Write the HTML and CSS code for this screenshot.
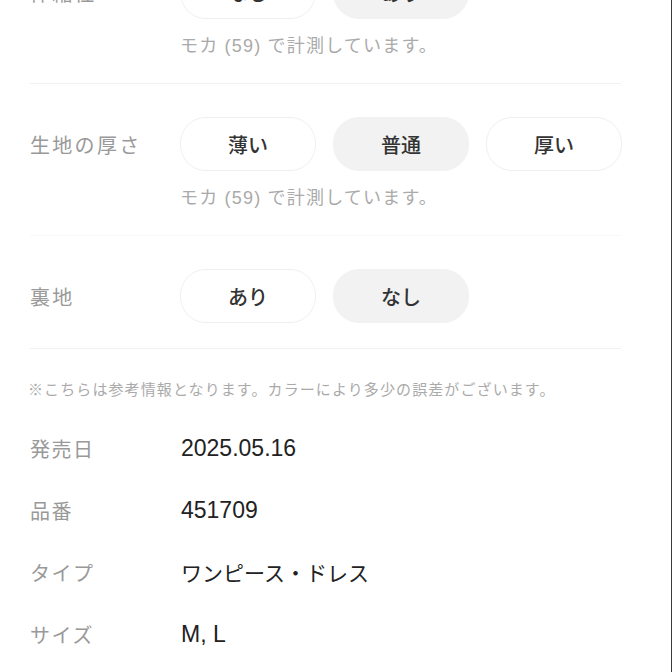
FILE: index.html
```html
<!DOCTYPE html>
<html lang="ja">
<head>
<meta charset="utf-8">
<link rel="stylesheet" href="styles.css">
</head>
<body>
<div class="page">
  <section class="spec spec-first">
    <div class="spec-label">伸縮性</div>
    <div class="spec-body">
      <div class="options">
        <div class="opt">なし</div>
        <div class="opt opt-on">あり</div>
      </div>
      <p class="note">モカ (59) で計測しています。</p>
    </div>
  </section>
  <section class="spec spec-soft">
    <div class="spec-label">生地の厚さ</div>
    <div class="spec-body">
      <div class="options">
        <div class="opt">薄い</div>
        <div class="opt opt-on">普通</div>
        <div class="opt">厚い</div>
      </div>
      <p class="note">モカ (59) で計測しています。</p>
    </div>
  </section>
  <section class="spec spec-last">
    <div class="spec-label">裏地</div>
    <div class="spec-body">
      <div class="options">
        <div class="opt">あり</div>
        <div class="opt opt-on">なし</div>
      </div>
    </div>
  </section>
  <p class="disclaimer">※こちらは参考情報となります。カラーにより多少の誤差がございます。</p>
  <dl class="info">
    <div class="info-row"><dt>発売日</dt><dd class="latin">2025.05.16</dd></div>
    <div class="info-row"><dt>品番</dt><dd class="latin">451709</dd></div>
    <div class="info-row"><dt>タイプ</dt><dd>ワンピース・ドレス</dd></div>
    <div class="info-row"><dt>サイズ</dt><dd class="latin">M, L</dd></div>
  </dl>
</div>
</body>
</html>
```
FILE: styles.css
```css
html, body {
  margin: 0;
  padding: 0;
  background: #fff;
}
body {
  height: 672px;
  overflow: hidden;
  border-right: 1px solid #3a3a3a;
  box-sizing: border-box;
  font-family: "Noto Sans CJK JP", sans-serif;
}
.page {
  padding: 0 50px 0 30px;
}
.spec {
  display: grid;
  grid-template-columns: 150px 1fr;
  align-items: start;
  padding: 33px 0 27px;
  border-bottom: 1px solid #f1f1f1;
}
.spec-first {
  margin-top: -68px;
}
.spec-soft {
  border-bottom-color: #f8f8f8;
}
.spec-last {
  padding-bottom: 25px;
}
.spec-label {
  height: 54px;
  display: flex;
  align-items: center;
  font-size: 20px;
  letter-spacing: 2.3px;
  color: #999;
}
.options {
  display: flex;
  gap: 17px;
}
.opt {
  width: 136px;
  height: 54px;
  box-sizing: border-box;
  border: 1px solid #f0f0f0;
  border-radius: 26px;
  display: flex;
  align-items: center;
  justify-content: center;
  font-size: 20px;
  font-weight: 500;
  color: #333;
  background: #fff;
}
.opt-on {
  background: #f2f2f2;
  border-color: #f2f2f2;
}
.note {
  margin: 17px 0 0;
  line-height: 20px;
  font-family: "Liberation Sans", "Noto Sans CJK JP", sans-serif;
  font-size: 18px;
  letter-spacing: 1.2px;
  color: #aaa;
}
.disclaimer {
  margin: 30px 0 0 -2px;
  line-height: 20px;
  font-size: 15px;
  letter-spacing: 1.1px;
  color: #aaa;
}
.info {
  margin: 18px 0 0;
}
.info-row {
  display: grid;
  grid-template-columns: 151px 1fr;
  align-items: center;
  height: 62px;
}
.info-row dt {
  font-size: 20px;
  letter-spacing: 1.5px;
  color: #999;
}
.info-row dd {
  margin: 0;
  font-size: 21px;
  color: #222;
}
.info-row dd.latin {
  font-family: "Liberation Sans", "Noto Sans CJK JP", sans-serif;
  font-size: 23px;
}
```
